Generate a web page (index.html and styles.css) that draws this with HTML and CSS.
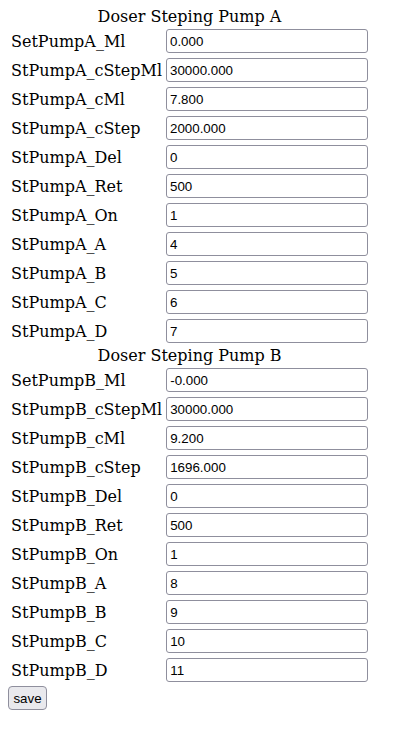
FILE: index.html
```html
<!DOCTYPE html>
<html>
<head>
<meta charset="utf-8">
<link rel="stylesheet" href="styles.css">
</head>
<body>
<form>
<table class="cfg">
<caption>Doser Steping Pump A</caption>
<tr><td>SetPumpA_Ml</td><td><input class="fld" type="text" value="0.000"></td></tr>
<tr><td>StPumpA_cStepMl</td><td><input class="fld" type="text" value="30000.000"></td></tr>
<tr><td>StPumpA_cMl</td><td><input class="fld" type="text" value="7.800"></td></tr>
<tr><td>StPumpA_cStep</td><td><input class="fld" type="text" value="2000.000"></td></tr>
<tr><td>StPumpA_Del</td><td><input class="fld" type="text" value="0"></td></tr>
<tr><td>StPumpA_Ret</td><td><input class="fld" type="text" value="500"></td></tr>
<tr><td>StPumpA_On</td><td><input class="fld" type="text" value="1"></td></tr>
<tr><td>StPumpA_A</td><td><input class="fld" type="text" value="4"></td></tr>
<tr><td>StPumpA_B</td><td><input class="fld" type="text" value="5"></td></tr>
<tr><td>StPumpA_C</td><td><input class="fld" type="text" value="6"></td></tr>
<tr><td>StPumpA_D</td><td><input class="fld" type="text" value="7"></td></tr>
</table>
<table class="cfg">
<caption>Doser Steping Pump B</caption>
<tr><td>SetPumpB_Ml</td><td><input class="fld" type="text" value="-0.000"></td></tr>
<tr><td>StPumpB_cStepMl</td><td><input class="fld" type="text" value="30000.000"></td></tr>
<tr><td>StPumpB_cMl</td><td><input class="fld" type="text" value="9.200"></td></tr>
<tr><td>StPumpB_cStep</td><td><input class="fld" type="text" value="1696.000"></td></tr>
<tr><td>StPumpB_Del</td><td><input class="fld" type="text" value="0"></td></tr>
<tr><td>StPumpB_Ret</td><td><input class="fld" type="text" value="500"></td></tr>
<tr><td>StPumpB_On</td><td><input class="fld" type="text" value="1"></td></tr>
<tr><td>StPumpB_A</td><td><input class="fld" type="text" value="8"></td></tr>
<tr><td>StPumpB_B</td><td><input class="fld" type="text" value="9"></td></tr>
<tr><td>StPumpB_C</td><td><input class="fld" type="text" value="10"></td></tr>
<tr><td>StPumpB_D</td><td><input class="fld" type="text" value="11"></td></tr>
</table>
<button type="button" class="save">save</button>
</form>
</body>
</html>
```
FILE: styles.css
```css
body {
  margin: 8px;
  font-family: "DejaVu Serif", serif;
  font-size: 16px;
  color: #000;
  background: #fff;
}
form {
  margin: 0;
}
.cfg {
  border-spacing: 2px;
}
.cfg caption {
  text-align: center;
  line-height: 18px;
}
.cfg td {
  padding: 1px;
  vertical-align: middle;
}
.fld {
  display: block;
  box-sizing: border-box;
  width: 202px;
  height: 24px;
  margin: 0 0 1px;
  padding: 1px 3px;
  border: 1px solid #8f8f9d;
  border-radius: 3px;
  background: #fff;
  color: #000;
  font-family: "Liberation Sans", sans-serif;
  font-size: 13.333px;
}
.save {
  display: block;
  box-sizing: border-box;
  height: 24px;
  width: 39px;
  margin: 0;
  padding: 1px 4px;
  border: 1px solid #8f8f9d;
  border-radius: 4px;
  background: #e9e9ed;
  color: #000;
  font-family: "Liberation Sans", sans-serif;
  font-size: 13.333px;
}
```
